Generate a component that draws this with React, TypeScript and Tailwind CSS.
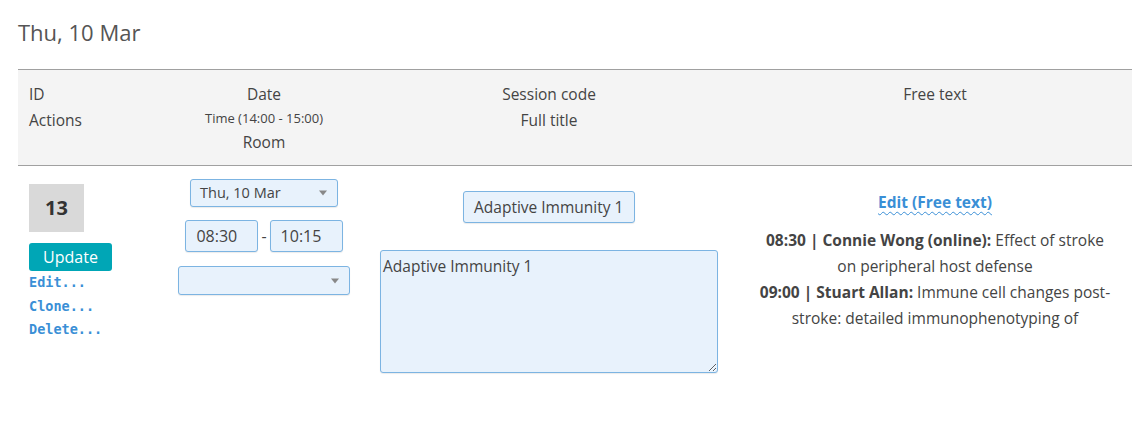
const Arrow = () => (
    <span className="absolute right-[10px] top-1/2 -translate-y-1/2 w-0 h-0 border-l-[4px] border-r-[4px] border-t-[5px] border-l-transparent border-r-transparent border-t-[#888]" />
)

const field = "bg-[#e8f2fc] border border-[#7cb4e2] rounded-[3px] shadow-[0_1px_1px_rgba(0,0,0,0.08)] text-[#444]"

const App = () => {
    return (
        <div className="min-h-screen bg-white font-['Open_Sans',sans-serif] text-[#444] pl-[18px]">
            <h2 className="pt-[17px] text-[22px] leading-[30px] text-[#555]">Thu, 10 Mar</h2>
            <table className="mt-[22px] w-[1114px] table-fixed border-collapse">
                <thead>
                    <tr className="bg-[#f4f4f4] border-t border-b border-[#a0a0a0] text-[15.5px] align-top">
                        <th className="w-[150px] font-normal text-left pl-[11px] pt-[13px]">
                            <div className="leading-[22px]">ID</div>
                            <div className="leading-[30px]">Actions</div>
                        </th>
                        <th className="w-[192px] font-normal text-center pt-[13px] pb-[12px]">
                            <div className="leading-[22px]">Date</div>
                            <div className="text-[13px] leading-[26px]">Time (14:00 - 15:00)</div>
                            <div className="leading-[22px]">Room</div>
                        </th>
                        <th className="w-[378px] font-normal text-center pt-[13px]">
                            <div className="leading-[22px]">Session code</div>
                            <div className="leading-[30px]">Full title</div>
                        </th>
                        <th className="font-normal text-center pt-[13px]">
                            <div className="leading-[22px]">Free text</div>
                        </th>
                    </tr>
                </thead>
                <tbody>
                    <tr className="align-top">
                        <td className="pl-[11px] pt-[18px]">
                            <div className="w-[55px] h-[48px] bg-[#d9d9d9] flex items-center justify-center text-[20px] font-bold text-[#333]">13</div>
                            <button className="mt-[11px] w-[83px] h-[28px] rounded-[3px] bg-[#00a6b6] text-white text-[16px] leading-[28px]">Update</button>
                            <div className="font-['DejaVu_Sans_Mono',monospace] font-bold text-[13.5px] leading-[23.5px] text-[#3a8fd6]">
                                <div>Edit...</div>
                                <div>Clone...</div>
                                <div>Delete...</div>
                            </div>
                        </td>
                        <td className="pt-[13px]">
                            <div className="flex flex-col items-center">
                                <div className={`relative w-[148px] h-[28px] pl-[9px] text-[14.5px] leading-[26px] text-left ${field}`}>
                                    Thu, 10 Mar
                                    <Arrow />
                                </div>
                                <div className="mt-[13px] flex items-center gap-[3px]">
                                    <div className={`w-[73px] h-[32px] pl-[10px] text-[16px] leading-[30px] ${field}`}>08:30</div>
                                    <span className="text-[16px]">-</span>
                                    <div className={`w-[73px] h-[32px] pl-[10px] text-[16px] leading-[30px] ${field}`}>10:15</div>
                                </div>
                                <div className={`relative mt-[14px] w-[172px] h-[29px] ${field}`}>
                                    <Arrow />
                                </div>
                            </div>
                        </td>
                        <td className="pt-[25px]">
                            <div className="flex flex-col items-center">
                                <div className={`w-[172px] h-[32px] pl-[10px] text-[15.5px] leading-[30px] text-left ${field}`}>Adaptive Immunity 1</div>
                                <textarea
                                    defaultValue="Adaptive Immunity 1"
                                    spellCheck={false}
                                    className={`mt-[27px] w-[338px] h-[123px] px-[2px] py-[3px] text-[15.5px] leading-[24px] outline-none resize-y ${field}`}
                                ></textarea>
                            </div>
                        </td>
                        <td className="pt-[25px] text-center">
                            <div className="text-[15.5px] leading-[22px] font-bold text-[#3a8fd6] underline decoration-wavy decoration-1 underline-offset-[3px]">Edit (Free text)</div>
                            <p className="mt-[14px] px-[20px] text-[15.5px] leading-[26px]">
                                <b>08:30 | Connie Wong (online):</b> Effect of stroke on peripheral host defense
                                <br />
                                <b>09:00 | Stuart Allan:</b> Immune cell changes post-stroke: detailed immunophenotyping of
                            </p>
                        </td>
                    </tr>
                </tbody>
            </table>
        </div>
    )
}
export default App
